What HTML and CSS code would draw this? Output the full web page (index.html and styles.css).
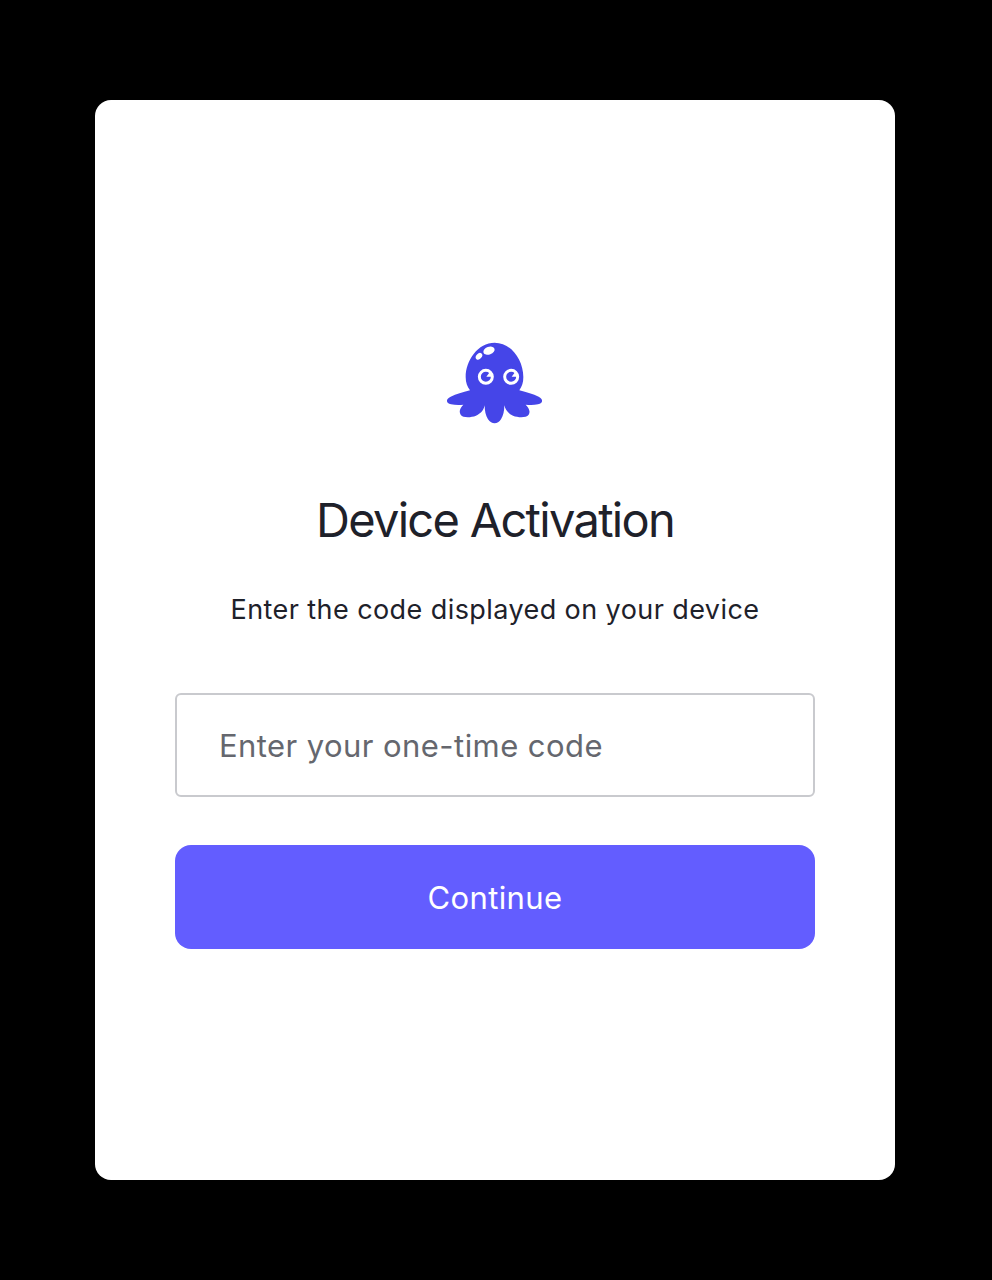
FILE: index.html
```html
<!DOCTYPE html>
<html lang="en">
<head>
<meta charset="utf-8">
<title>Device Activation</title>
<link rel="stylesheet" href="styles.css">
</head>
<body>
<main class="card">
  <svg class="logo" viewBox="0 0 330 285" aria-hidden="true">
    <path class="logo-body" d="M164 23C114 23 77 76 77 126C77 143 82 155 90 166C67 173 49 177 32 185C16 192 18 205 33 208C45 210 58 210 70 209C60 219 56 230 62 239C69 249 92 248 108 242C124 235 132 224 134 211C134 228 137 242 144 253C155 269 173 269 183 253C190 242 193 228 193 211C196 224 204 235 219 242C235 248 258 249 266 239C272 230 267 219 257 209C270 210 283 210 294 208C309 205 311 192 296 185C279 177 261 173 238 166C246 154 250 143 250 126C250 76 214 23 164 23Z"/>
    <ellipse class="logo-light" cx="147" cy="47" rx="17.500" ry="11.500" transform="rotate(-20 147 47)"/>
    <ellipse class="logo-light" cx="117" cy="64" rx="11.500" ry="8" transform="rotate(-48 117 64)"/>
    <circle class="logo-eye" cx="137.500" cy="125.500" r="19.500"/>
    <circle class="logo-eye" cx="213.500" cy="125.500" r="19.500"/>
    <path class="logo-light" d="M139 125L149 112L158 125ZM215 125L225 112L234 125Z"/>
  </svg>
  <h1 class="title">Device Activation</h1>
  <p class="subtitle">Enter the code displayed on your device</p>
  <form class="form">
    <input class="code" type="text" placeholder="Enter your one-time code" aria-label="One-time code">
    <button class="submit" type="button">Continue</button>
  </form>
</main>
</body>
</html>
```
FILE: styles.css
```css
* { box-sizing: border-box; }
body {
  margin: 0;
  height: 1280px;
  padding: 100px 97px 100px 95px;
  background: #000;
  font-family: Inter, "Liberation Sans", sans-serif;
  color: #1e212a;
}
.card {
  display: flex;
  flex-direction: column;
  align-items: center;
  width: 800px;
  height: 1080px;
  padding: 235px 80px 0;
  border-radius: 16px;
  background: #fff;
}
.logo { width: 110px; height: 95px; flex: none; }
.logo-body { fill: #4545e8; }
.logo-light { fill: #fff; }
.logo-eye { fill: none; stroke: #fff; stroke-width: 9; }
.title {
  margin: 60px 0 0;
  font-size: 47px;
  line-height: 60px;
  font-weight: 400;
  letter-spacing: -1.7px;
  white-space: nowrap;
}
.subtitle {
  margin: 40px 0 0;
  font-size: 27px;
  line-height: 40px;
  letter-spacing: 0.42px;
  white-space: nowrap;
}
.form { width: 100%; margin-top: 63px; display: flex; flex-direction: column; gap: 48px; }
.code {
  height: 104px;
  padding: 0 42px;
  border: 2px solid #c9cace;
  border-radius: 6px;
  background: #fff;
  font: 400 31px Inter, "Liberation Sans", sans-serif;
  letter-spacing: 0.43px;
}
.code::placeholder { color: #65676e; opacity: 1; }
.submit {
  height: 104px;
  border: 0;
  border-radius: 16px;
  background: #635dff;
  color: #fff;
  font: 400 31px Inter, "Liberation Sans", sans-serif;
  letter-spacing: 0.38px;
}
```
